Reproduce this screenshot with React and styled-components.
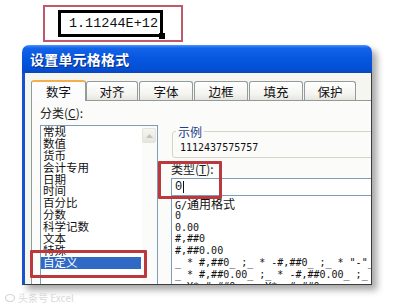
import React from "react";
import styled, { createGlobalStyle } from "styled-components";

const GlobalStyle = createGlobalStyle`
  body {
    margin: 0;
    background: #ffffff;
  }
`;

const cjk = `"Noto Sans CJK SC", "Noto Sans", sans-serif`;
const mono = `"DejaVu Sans Mono", "Liberation Mono", monospace`;

const Page = styled.div`
  position: relative;
  width: 394px;
  height: 307px;
  overflow: hidden;
  background: #ffffff;
  font-family: ${cjk};
`;

const CellArea = styled.div`
  padding: 5px 0 0 43px;
`;

const RedFrame = styled.div`
  box-sizing: border-box;
  width: 140px;
  height: 37px;
  border: 2px solid #c05a6a;
  display: flex;
  align-items: center;
  padding-left: 13px;
`;

const Cell = styled.div`
  position: relative;
  box-sizing: border-box;
  width: 105px;
  height: 27px;
  border: 3px solid #000;
  font-family: "Liberation Mono", monospace;
  font-size: 13.5px;
  line-height: 21px;
  text-align: right;
  padding-right: 2px;
  color: #111;
`;

const FillHandle = styled.span`
  position: absolute;
  right: -5px;
  bottom: -5px;
  width: 6px;
  height: 6px;
  background: #000;
`;

const Dialog = styled.div`
  margin: 3px 0 0 22px;
  width: 350px;
  height: 240px;
  display: flex;
  flex-direction: column;
  border-radius: 7px 7px 0 0;
  overflow: hidden;
  box-shadow: 5px 5px 7px rgba(0, 0, 0, 0.35);
`;

const TitleBar = styled.div`
  height: 28px;
  flex: none;
  display: flex;
  align-items: center;
  padding-left: 8px;
  background: linear-gradient(#4a95ff 0, #1464ea 3px, #0758e0 45%, #034fd6 85%, #0a45bd 100%);
  color: #fff;
  font-weight: bold;
  font-size: 14px;
  letter-spacing: 0.2px;
  text-shadow: 1px 1px 0 #0a2f8a;
`;

const Body = styled.div`
  flex: 1;
  min-height: 0;
  overflow: hidden;
  background: #f6f6f1;
  border-left: 3px solid #1a4fd0;
  border-right: 1px solid #3c3c3c;
  border-bottom: 1px solid #3c3c3c;
  padding: 6px 0 0 6px;
`;

const Tabs = styled.div`
  display: flex;
  height: 21px;
  align-items: flex-end;
`;

const Tab = styled.div`
  box-sizing: border-box;
  width: ${(p) => p.$w}px;
  height: ${(p) => (p.$active ? 21 : 19)}px;
  margin-right: ${(p) => (p.$active ? 0 : 1)}px;
  display: flex;
  align-items: center;
  justify-content: center;
  font-size: 12.5px;
  color: #111;
  border: 1px solid #919b9c;
  border-bottom: none;
  border-radius: 3px 3px 0 0;
  background: ${(p) =>
    p.$active ? "#fcfcfe" : "linear-gradient(#ffffff, #f3f3ef 70%, #e6e5df)"};
  border-top: ${(p) => (p.$active ? "2px solid #f2b04a" : "1px solid #919b9c")};
  position: relative;
  z-index: ${(p) => (p.$active ? 1 : 0)};
  margin-bottom: ${(p) => (p.$active ? -1 : 0)}px;
`;

const Panel = styled.div`
  width: 420px;
  height: 300px;
  box-sizing: border-box;
  border: 1px solid #919b9c;
  background: #fbfbf9;
  display: flex;
  padding: 5px 0 0 8px;
  gap: 12px;
`;

const LeftCol = styled.div`
  width: 118px;
  display: flex;
  flex-direction: column;
`;

const Label = styled.div`
  font-size: 12px;
  line-height: 13px;
  color: #222;
  margin: ${(p) => p.$m || "0"};
  & u {
    text-decoration: underline;
  }
`;

const ListBox = styled.div`
  margin-top: 6px;
  flex: 1;
  display: flex;
  border: 1px solid #7f9db9;
  background: #fff;
`;

const Items = styled.div`
  flex: 1;
  padding-right: 1px;
`;

const Item = styled.div`
  font-size: 11.5px;
  line-height: 11.9px;
  height: 11.9px;
  padding-left: 2px;
  white-space: nowrap;
  color: ${(p) => (p.$sel ? "#fff" : "#111")};
  background: ${(p) => (p.$sel ? "#316ac5" : "transparent")};
`;

const ScrollTrack = styled.div`
  width: 15px;
  padding-top: 2px;
  background: #fbfbf9;
`;

const ScrollBtn = styled.div`
  box-sizing: border-box;
  width: 14px;
  height: 15px;
  border: 1px solid #e3e3dc;
  border-radius: 2px;
  background: linear-gradient(#f6f6f2, #e6e6de);
  display: flex;
  align-items: center;
  justify-content: center;
`;

const RightCol = styled.div`
  flex: 1;
  display: flex;
  flex-direction: column;
  padding-top: 19px;
`;

const Group = styled.fieldset`
  margin: 0 0 0 2px;
  padding: 0 0 3px 3px;
  border: 1px solid #d3d3c7;
  border-radius: 3px;
  min-width: 0;
`;

const Legend = styled.legend`
  padding: 0 2px;
  font-size: 12px;
  line-height: 13px;
  color: #23408a;
`;

const MonoText = styled.div`
  font-family: ${mono};
  font-size: 10px;
  line-height: 12px;
  color: #111;
  white-space: pre;
  padding-left: ${(p) => p.$pl || 0}px;
  margin-top: ${(p) => p.$mt || 0}px;
`;

const Input = styled.div`
  box-sizing: border-box;
  margin: 3px 0 0 1px;
  height: 18px;
  border: 1px solid #7f9db9;
  background: #fff;
  display: flex;
  align-items: center;
  padding-left: 3px;
  font-family: "Liberation Mono", monospace;
  font-size: 12px;
  color: #111;
`;

const Caret = styled.span`
  display: inline-block;
  width: 1px;
  height: 12px;
  background: #111;
  margin-left: 1px;
`;

const FormatList = styled.div`
  margin-left: 1px;
  flex: 1;
  border: 1px solid #7f9db9;
  border-top: none;
  background: #fff;
  padding: 2px 0 0 3px;
`;

const FormatItem = styled.div`
  font-family: ${mono};
  font-size: 10px;
  line-height: 11.8px;
  height: 11.8px;
  white-space: pre;
  color: #111;
  & span {
    font-family: ${cjk};
    font-size: 12px;
  }
`;

const Mark = styled.div`
  position: absolute;
  left: ${(p) => p.$x}px;
  top: ${(p) => p.$y}px;
  width: ${(p) => p.$w}px;
  height: ${(p) => p.$h}px;
  box-sizing: border-box;
  border: 3px solid #b9393f;
  border-radius: 1px;
`;

const Watermark = styled.div`
  margin: 7px 0 0 5px;
  display: flex;
  align-items: center;
  gap: 3px;
  font-size: 10px;
  line-height: 11px;
  color: #d9d9d9;
`;

const categories = [
  "常规",
  "数值",
  "货币",
  "会计专用",
  "日期",
  "时间",
  "百分比",
  "分数",
  "科学记数",
  "文本",
  "特殊",
  "自定义",
];

const formats = [
  null,
  "0",
  "0.00",
  "#,##0",
  "#,##0.00",
  '_ * #,##0_ ;_ * -#,##0_ ;_ * "-"_ ;_ @_ ',
  "_ * #,##0.00_ ;_ * -#,##0.00_ ;_ * \"-\"??_ ",
  '_ ¥* #,##0_ ;_ ¥* -#,##0_ ',
];

const tabs = [
  ["数字", 55],
  ["对齐", 52],
  ["字体", 54],
  ["边框", 54],
  ["填充", 54],
  ["保护", 52],
];

export default function App() {
  return (
    <Page>
      <GlobalStyle />
      <CellArea>
        <RedFrame>
          <Cell>
            1.11244E+12
            <FillHandle />
          </Cell>
        </RedFrame>
      </CellArea>

      <Dialog>
        <TitleBar>设置单元格格式</TitleBar>
        <Body>
          <Tabs>
            {tabs.map(([t, w], i) => (
              <Tab key={t} $w={w} $active={i === 0}>
                {t}
              </Tab>
            ))}
          </Tabs>
          <Panel>
            <LeftCol>
              <Label>
                分类(<u>C</u>):
              </Label>
              <ListBox>
                <Items>
                  {categories.map((c) => (
                    <Item key={c} $sel={c === "自定义"}>
                      {c}
                    </Item>
                  ))}
                </Items>
                <ScrollTrack>
                  <ScrollBtn>
                    <svg width="7" height="4" viewBox="0 0 7 4">
                      <path d="M0 4 L3.5 0 L7 4 Z" fill="#c4c4bc" />
                    </svg>
                  </ScrollBtn>
                </ScrollTrack>
              </ListBox>
            </LeftCol>

            <RightCol>
              <Group>
                <Legend>示例</Legend>
                <MonoText $pl={4} $mt={4}>
                  1112437575757
                </MonoText>
              </Group>
              <Label $m="4px 0 0 1px">
                类型(<u>T</u>):
              </Label>
              <Input>
                0<Caret />
              </Input>
              <FormatList>
                {formats.map((f, i) => (
                  <FormatItem key={i}>
                    {f === null ? (
                      <>
                        G/<span>通用格式</span>
                      </>
                    ) : (
                      f
                    )}
                  </FormatItem>
                ))}
              </FormatList>
            </RightCol>
          </Panel>
        </Body>
      </Dialog>

      <Watermark>
        <svg width="10" height="9" viewBox="0 0 10 9">
          <ellipse cx="5" cy="5" rx="4.5" ry="3.5" fill="none" stroke="#d6d6d6" strokeWidth="1.2" />
        </svg>
        头条号 Excel
      </Watermark>

      <Mark $x={158} $y={161} $w={64} $h={38} />
      <Mark $x={30} $y={250} $w={117} $h={28} />
    </Page>
  );
}
